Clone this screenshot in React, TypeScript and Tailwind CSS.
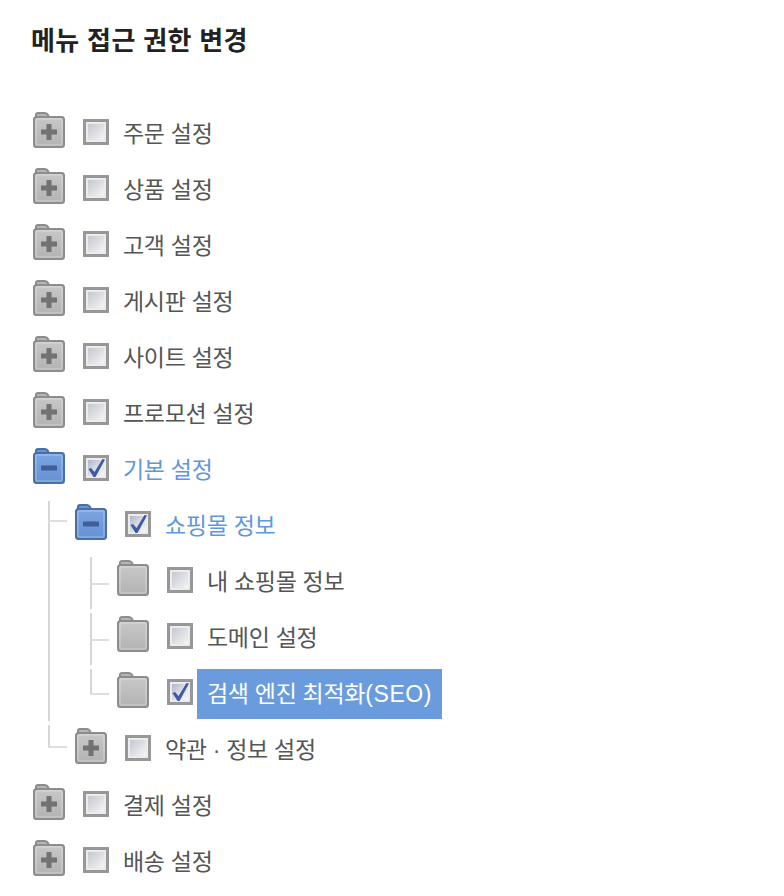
import { useId, type ReactNode } from "react";

type Mark = "plus" | "minus" | "none";

type Node = {
  label: ReactNode;
  mark: Mark;
  checked?: boolean;
  open?: boolean;
  selected?: boolean;
  elbow?: string;
  children?: Node[];
};

const tree: Node[] = [
  { label: "주문 설정", mark: "plus" },
  { label: "상품 설정", mark: "plus" },
  { label: "고객 설정", mark: "plus" },
  { label: "게시판 설정", mark: "plus" },
  { label: "사이트 설정", mark: "plus" },
  { label: "프로모션 설정", mark: "plus" },
  {
    label: "기본 설정",
    mark: "minus",
    checked: true,
    open: true,
    children: [
      {
        label: "쇼핑몰 정보",
        mark: "minus",
        checked: true,
        open: true,
        elbow: "top-[23px]",
        children: [
          { label: "내 쇼핑몰 정보", mark: "none", elbow: "top-[30px]" },
          { label: "도메인 설정", mark: "none", elbow: "top-[30px]" },
          {
            label: (
              <>
                검색 엔진 최적화<span className="tracking-[0.6px]">(SEO)</span>
              </>
            ),
            mark: "none",
            checked: true,
            selected: true,
            elbow: "top-[28px]",
          },
        ],
      },
      { label: "약관 · 정보 설정", mark: "plus", elbow: "top-[25px]" },
    ],
  },
  { label: "결제 설정", mark: "plus" },
  { label: "배송 설정", mark: "plus" },
];

function Folder({ mark, open }: { mark: Mark; open?: boolean }) {
  const id = useId();
  const edge = open ? "#4a6fa6" : "#8c8c8c";
  const top = open ? "#7ba5e2" : "#c8c8c8";
  const bottom = open ? "#6592d4" : "#b2b2b2";
  const sign = open ? "#3f5f96" : "#727272";
  return (
    <svg width="32" height="37" viewBox="0 0 32 37" className="mt-[7px] shrink-0 blur-[0.5px]">
      <path d="M3 6V2.5Q3 1 5 1H12Q14 1 15 3L16 6Z" fill={open ? "#6a94d2" : "#b5b5b5"} stroke={edge} strokeWidth="2" />
      <defs>
        <linearGradient id={id} x1="0" y1="0" x2="0" y2="1">
          <stop offset="0" stopColor={top} />
          <stop offset="1" stopColor={bottom} />
        </linearGradient>
      </defs>
      <rect x="1" y="5" width="30" height="30" rx="2.5" fill={`url(#${id})`} stroke={edge} strokeWidth="2" />
      <rect x="3" y="7" width="26" height="26" rx="1" fill="none" stroke="#ffffff" strokeOpacity="0.25" strokeWidth="1.5" />
      {mark !== "none" && <rect x="8" y="17.5" width="16" height="5" rx="0.5" fill={sign} />}
      {mark === "plus" && <rect x="13.5" y="12" width="5" height="16" rx="0.5" fill={sign} />}
    </svg>
  );
}

function Check({ checked }: { checked?: boolean }) {
  return (
    <div className="relative ml-[18px] mt-[14px] h-[26px] w-[26px] shrink-0 border-[3px] border-[#989898] bg-[#ececec] p-[2px] blur-[0.5px]">
      <div
        className={`h-full w-full bg-gradient-to-br via-[#dcdee3] to-[#f6f6f6] ${
          checked ? "from-[#aeb4c8]" : "from-[#c4c7d0]"
        }`}
      />
      {checked && (
        <svg viewBox="0 0 20 20" className="absolute inset-0 h-5 w-5">
          <path d="M2.5 11L5 10L8.5 14L16.5 1L19 1.5L9.5 19L7.5 19Z" fill="#3e5ba3" />
        </svg>
      )}
    </div>
  );
}

function Row({ node, last, nested }: { node: Node; last: boolean; nested: boolean }) {
  const color = node.selected
    ? "bg-[#6a9cdd] text-white"
    : node.open
      ? "text-[#5f97dc]"
      : "text-[#555555]";
  return (
    <li className="relative">
      {nested && (
        <>
          <span
            className={`absolute left-[-27px] top-[4px] w-[2px] bg-[#d6d6d6] ${
              last ? (node.mark === "plus" ? "h-[22px]" : "h-[25px]") : "bottom-0"
            }`}
          />
          <span className={`absolute left-[-27px] h-[2px] w-[19px] bg-[#dedede] ${node.elbow}`} />
        </>
      )}
      <div className="flex h-[56px] items-start">
        <Folder mark={node.mark} open={node.open} />
        <Check checked={node.checked} />
        <span
          className={`ml-[4px] mt-[4px] flex h-[50px] items-center whitespace-pre px-[10px] text-[23px] leading-none tracking-[-0.3px] ${color}`}
        >
          {node.label}
        </span>
      </div>
      {node.children && (
        <ul className="pl-[42px]">
          {node.children.map((child, i) => (
            <Row key={i} node={child} nested last={i === node.children!.length - 1} />
          ))}
        </ul>
      )}
    </li>
  );
}

export default function App() {
  return (
    <div className="h-[896px] overflow-hidden bg-white pl-[33px] font-['Liberation_Sans','Noto_Sans_CJK_KR',sans-serif]">
      <h1 className="ml-[-2px] flex h-[105px] items-start pt-[24px] text-[26px] font-bold leading-[34px] tracking-[0.35px] text-[#222222]">
        메뉴 접근 권한 변경
      </h1>
      <ul>
        {tree.map((node, i) => (
          <Row key={i} node={node} nested={false} last={false} />
        ))}
      </ul>
    </div>
  );
}
